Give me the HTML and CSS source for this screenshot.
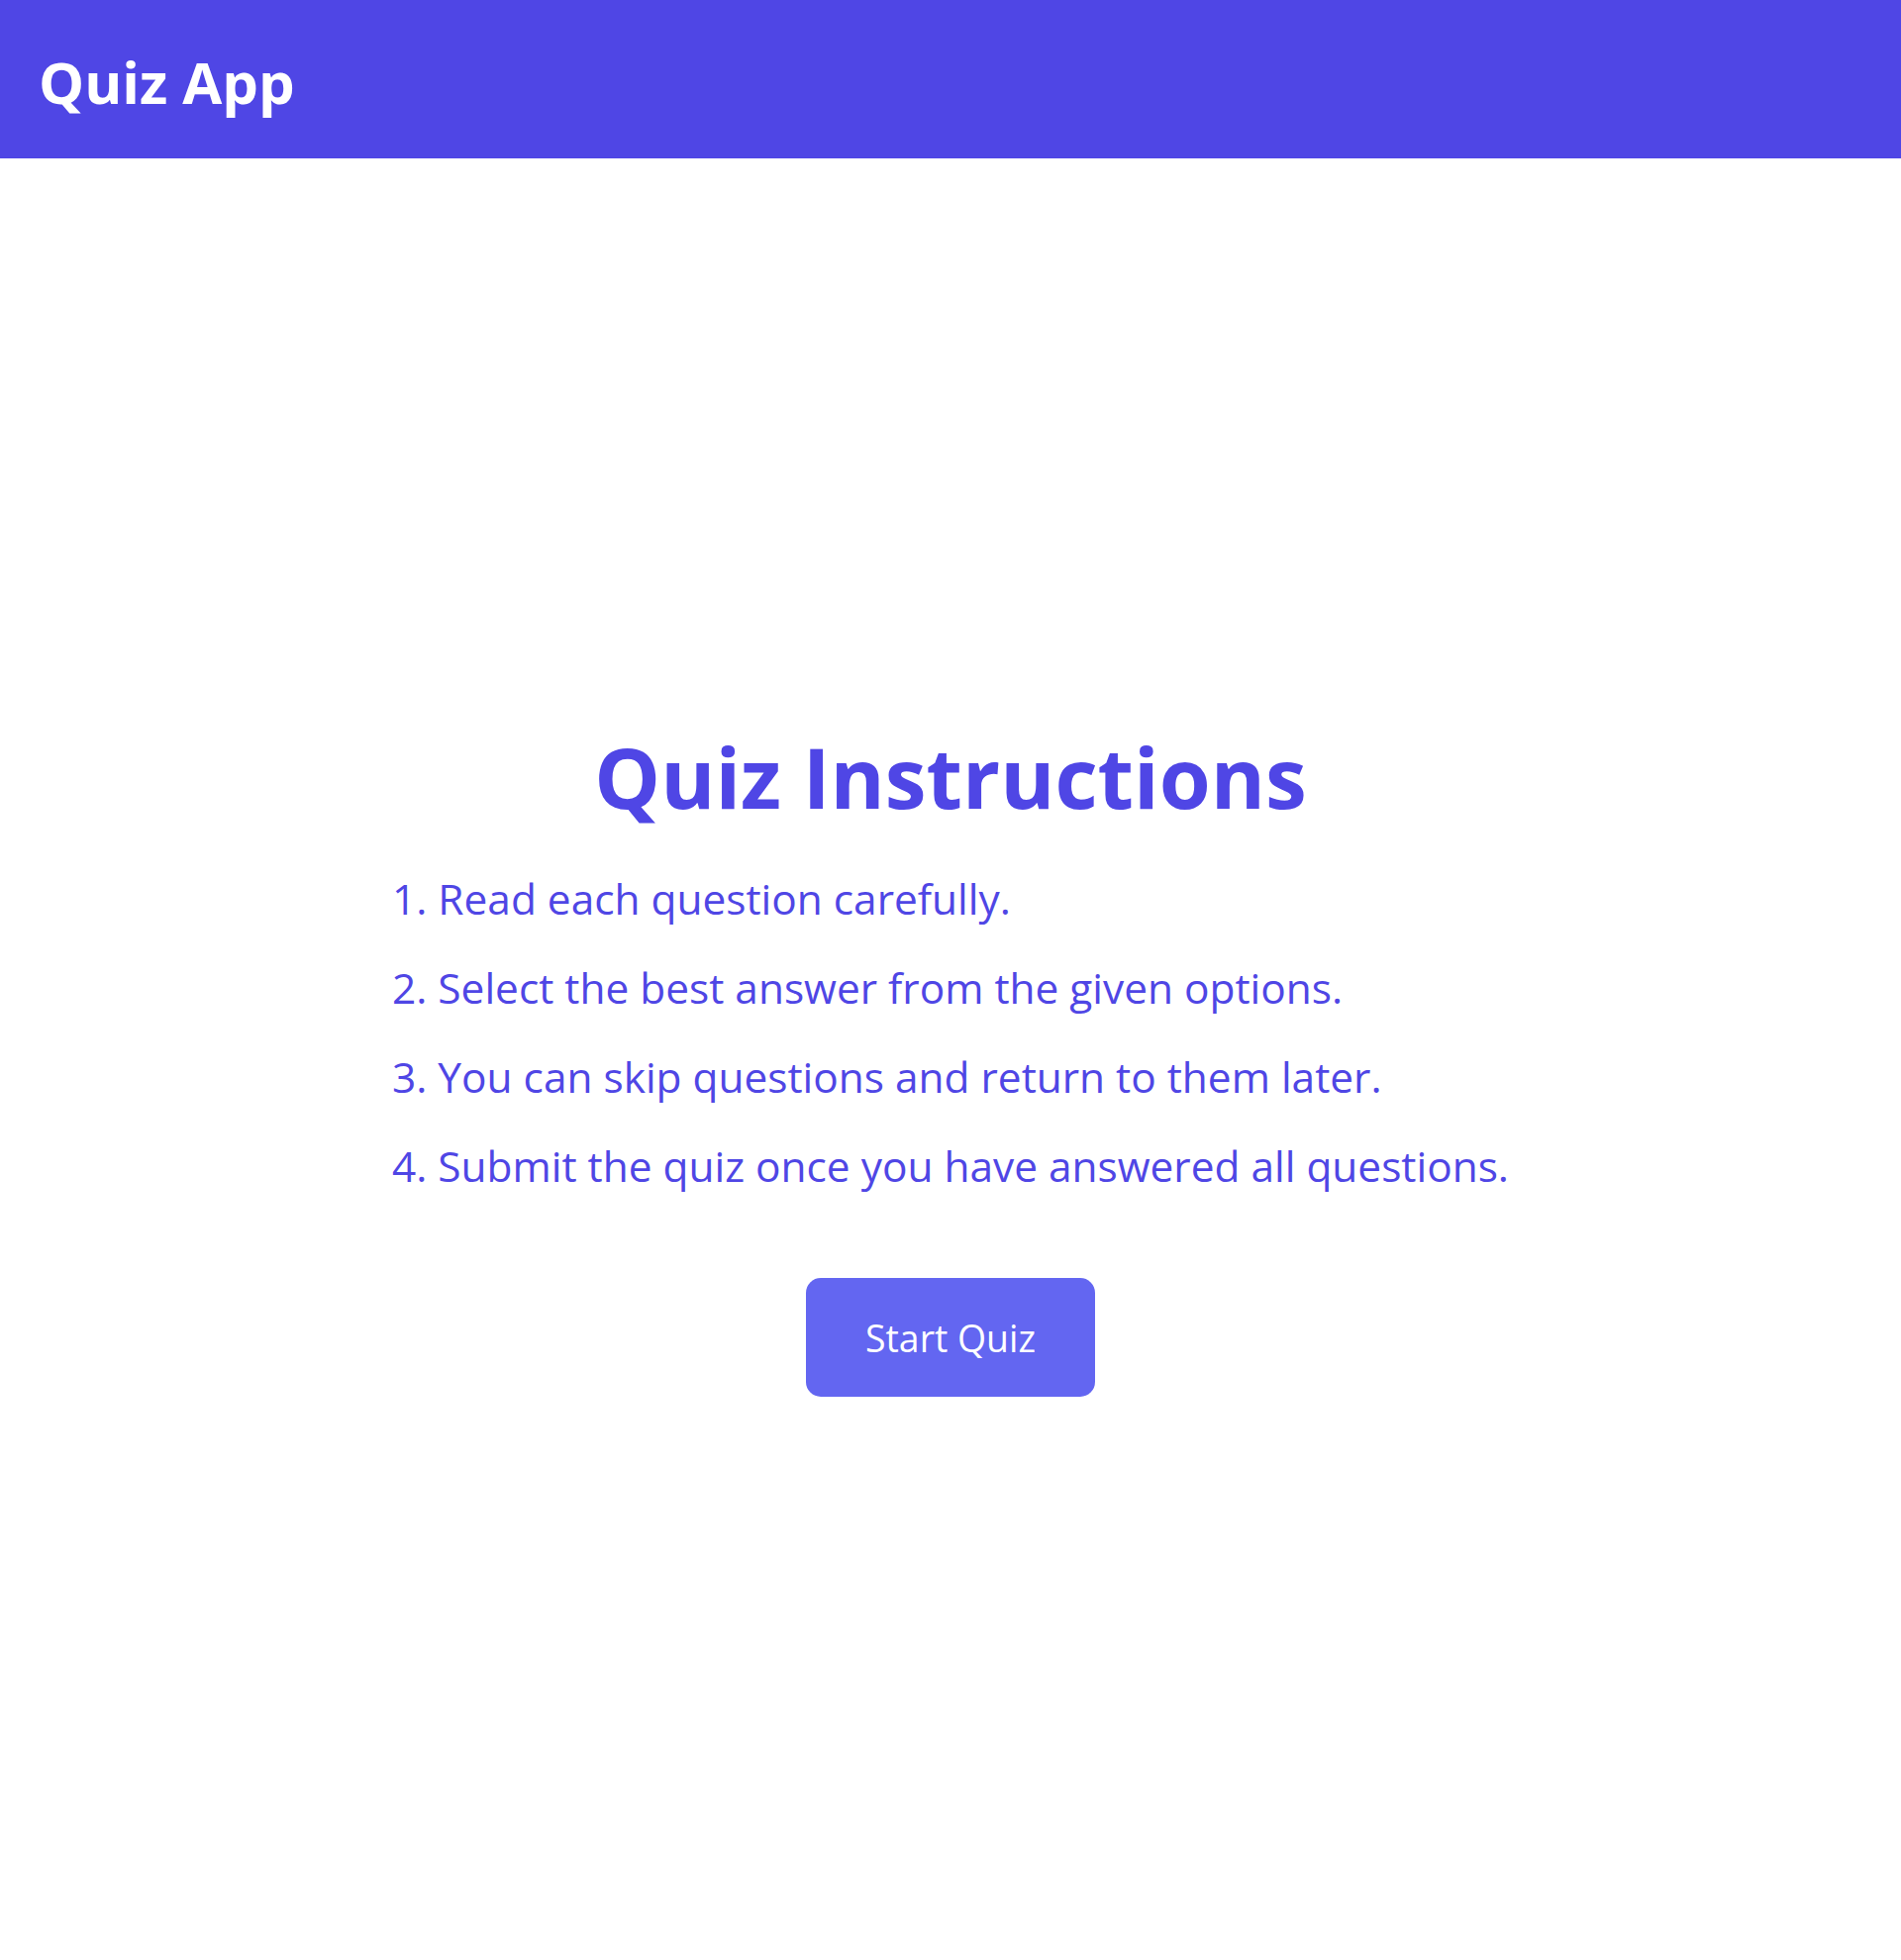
FILE: index.html
```html
<!DOCTYPE html>
<html lang="en">
<head>
<meta charset="utf-8">
<title>Quiz App</title>
<link rel="stylesheet" href="styles.css">
</head>
<body>
<header class="app-header">
  <h1 class="app-title">Quiz App</h1>
</header>
<main class="app-main">
  <section class="instructions">
    <h2 class="instructions-title">Quiz Instructions</h2>
    <ol class="instructions-list">
      <li>1. Read each question carefully.</li>
      <li>2. Select the best answer from the given options.</li>
      <li>3. You can skip questions and return to them later.</li>
      <li>4. Submit the quiz once you have answered all questions.</li>
    </ol>
    <button class="start-btn" type="button">Start Quiz</button>
  </section>
</main>
</body>
</html>
```
FILE: styles.css
```css
* { box-sizing: border-box; }
html, body { margin: 0; padding: 0; }
body {
  font-family: "Open Sans", "Noto Sans", sans-serif;
  background: #ffffff;
  min-height: 1980px;
  display: flex;
  flex-direction: column;
}
.app-header {
  height: 160px;
  background: #4f46e5;
  display: flex;
  align-items: center;
  padding: 4px 40px 0 39px;
  flex-shrink: 0;
}
.app-title {
  margin: 0;
  color: #ffffff;
  font-size: 58px;
  font-weight: 700;
}
.app-main {
  flex: 1;
  display: flex;
  align-items: center;
  justify-content: center;
  padding-top: 6px;
}
.instructions {
  display: flex;
  flex-direction: column;
  align-items: center;
}
.instructions-title {
  margin: 0;
  color: #4f46e5;
  font-size: 84px;
  font-weight: 700;
  line-height: 1.2;
}
.instructions-list {
  list-style: none;
  margin: 28px 0 0;
  padding: 0;
  color: #4f46e5;
  font-size: 42.4px;
  line-height: 90px;
}
.start-btn {
  margin-top: 68px;
  height: 120px;
  padding: 0 60px;
  border: none;
  border-radius: 15px;
  background: #6366f1;
  color: #ffffff;
  font-family: "Open Sans", "Noto Sans", sans-serif;
  font-size: 37.4px;
  display: flex;
  align-items: center;
  justify-content: center;
  cursor: pointer;
}
```
